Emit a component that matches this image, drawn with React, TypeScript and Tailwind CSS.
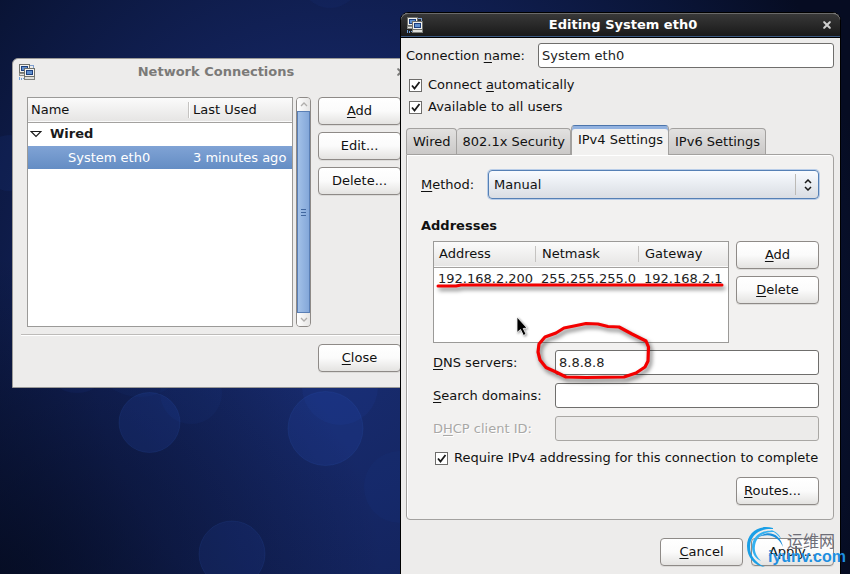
import React, { useState } from "react"
import clsx from "clsx"

const NetworkIcon = () => (
  <svg width="17" height="17" viewBox="0 0 17 17" shapeRendering="crispEdges">
    <path d="M11 1h3v4" fill="none" stroke="#7f9fcf" />
    <rect x="0" y="0" width="11" height="9" fill="#6f716c" />
    <rect x="1" y="1" width="9" height="7" fill="#f2f2ef" />
    <rect x="2" y="2" width="7" height="5" fill="#1d3f7d" />
    <rect x="3" y="3" width="5" height="3" fill="#5f8fce" />
    <rect x="0" y="9" width="6" height="3" fill="#8b8d88" />
    <rect x="1" y="10" width="5" height="1" fill="#e3e3df" />
    <rect x="5" y="4" width="11" height="9" fill="#6f716c" />
    <rect x="6" y="5" width="9" height="7" fill="#f2f2ef" />
    <rect x="7" y="6" width="7" height="5" fill="#1d3f7d" />
    <rect x="8" y="7" width="5" height="3" fill="#5f8fce" />
    <rect x="5" y="13" width="11" height="3" fill="#7f817c" />
    <rect x="6" y="13" width="9" height="2" fill="#dededa" />
    <rect x="0" y="13" width="1" height="3" fill="#6f9fd8" />
    <rect x="2" y="14" width="1" height="2" fill="#6f9fd8" />
    <rect x="4" y="14" width="1" height="1" fill="#6f9fd8" />
  </svg>
)

const CloseIcon = () => (
  <svg width="10" height="10" viewBox="0 0 10 10">
    <path d="M2 2L8 8M8 2L2 8" stroke="currentColor" strokeWidth="2" />
    <path d="M1 2h2M7 2h2M1 8h2M7 8h2" stroke="currentColor" strokeWidth="1" />
  </svg>
)

type ButtonProps = {
  children: React.ReactNode
  align?: "center" | "left"
  onClick?: () => void
}

const Button = ({ children, align = "center", onClick }: ButtonProps) => (
  <button
    type="button"
    onClick={onClick}
    className={clsx(
      "h-7 w-[83px] shrink-0 rounded border border-[#8e8a87] bg-linear-to-b from-white via-[#fbfbfb] to-[#e4e3e1] px-[7px] shadow-[0_1px_0_#dcdbd9]",
      align === "left" ? "text-left" : "text-center"
    )}
  >
    {children}
  </button>
)

type CheckProps = {
  id: string
  checked: boolean
  onChange: (value: boolean) => void
  children: React.ReactNode
}

const Check = ({ id, checked, onChange, children }: CheckProps) => (
  <div className="flex h-[22px] items-center gap-[6px]">
    <span className="relative flex h-[13px] w-[13px]">
      <input
        id={id}
        type="checkbox"
        checked={checked}
        onChange={e => onChange(e.target.checked)}
        className="h-[13px] w-[13px] appearance-none border border-[#6d6c6a] bg-white"
      />
      {checked && (
        <svg
          className="pointer-events-none absolute inset-0"
          width="13"
          height="13"
          viewBox="0 0 13 13"
        >
          <path d="M3 6.500L5.500 9.500L10.500 3" fill="none" stroke="#1a1a1a" strokeWidth="1.800" />
        </svg>
      )}
    </span>
    <label htmlFor={id}>{children}</label>
  </div>
)

type FieldProps = {
  id: string
  label: React.ReactNode
  value: string
  onChange?: (value: string) => void
  disabled?: boolean
}

const Field = ({ id, label, value, onChange, disabled }: FieldProps) => (
  <div className="flex items-center">
    <label
      htmlFor={id}
      className={clsx(
        "w-[122px] shrink-0",
        disabled && "text-[#a9a8a6] [text-shadow:1px_1px_0_#ffffff]"
      )}
    >
      {label}
    </label>
    <input
      id={id}
      type="text"
      value={value}
      disabled={disabled}
      onChange={e => onChange?.(e.target.value)}
      className={clsx(
        "h-[25px] min-w-0 grow rounded-[3px] border px-[3px]",
        disabled ? "border-[#a9a7a4] bg-[#ecebea]" : "border-[#6f6e6c] bg-white text-[#222]"
      )}
    />
  </div>
)

const Wallpaper = () => (
  <svg className="absolute inset-0" width="850" height="574" viewBox="0 0 850 574">
    <g fill="#2850b8">
      <circle cx="77" cy="359" r="34" opacity="0.09" />
      <circle cx="140" cy="345" r="52" opacity="0.06" />
      <circle cx="191" cy="393" r="31" opacity="0.07" />
      <circle cx="10" cy="163" r="28" opacity="0.1" />
      <circle cx="340" cy="387" r="38" opacity="0.1" />
      <circle cx="400" cy="487" r="36" opacity="0.06" />
      <circle cx="330" cy="-22" r="30" opacity="0.08" />
    </g>
    <g fill="#2850b8" fillOpacity="0.18" stroke="#3d68d0" strokeOpacity="0.12">
      <ellipse cx="149.500" cy="422.500" rx="30.500" ry="30" />
      <ellipse cx="325.500" cy="428.500" rx="37.500" ry="37" />
      <ellipse cx="232" cy="554" rx="33" ry="33" fillOpacity="0.14" />
    </g>
  </svg>
)

const sideButtons = [
  <>
    <u>A</u>dd
  </>,
  "Edit...",
  "Delete...",
]

const NetworkConnections = () => {
  const [open, setOpen] = useState(true)

  return (
    <section className="absolute top-[58px] left-3 w-[404px] rounded-t-md border border-[#9b9a98] bg-[#edeceb]">
      <header className="flex h-[26px] items-center px-[6px] text-[#7b7a78]">
        <NetworkIcon />
        <h1 className="grow text-center font-bold">Network Connections</h1>
        <button type="button" aria-label="Close window" className="pr-[3px]">
          <CloseIcon />
        </button>
      </header>

      <div className="mt-3 flex px-[14px]">
        <div className="h-[230px] min-w-0 grow border border-[#9b9a98] bg-white">
          <table className="w-full table-fixed border-collapse text-left">
            <thead>
              <tr className="h-6 border-b border-[#a3a19f] bg-linear-to-b from-[#fbfbfb] to-[#e6e5e4]">
                <th className="w-[160px] pl-[3px] font-normal">Name</th>
                <th className="p-0 font-normal">
                  <div className="border-l border-[#c5c3c1] pl-1 leading-4 shadow-[inset_1px_0_0_#fff]">
                    Last Used
                  </div>
                </th>
              </tr>
            </thead>
            <tbody>
              <tr className="h-6">
                <td colSpan={2} className="p-0 font-bold text-[#1a1a1a]">
                  <button
                    type="button"
                    onClick={() => setOpen(x => !x)}
                    className="flex items-center gap-2 pl-[2px]"
                  >
                    <svg width="12" height="8" viewBox="0 0 12 8">
                      <path d="M1 1.500H11L6 6.500Z" fill="white" stroke="#1a1a1a" strokeWidth="1.200" />
                    </svg>
                    Wired
                  </button>
                </td>
              </tr>
              {open && (
                <tr className="h-[23px] bg-linear-to-b from-[#80a3d5] to-[#648dc4] text-white">
                  <td className="py-0 pr-0 pl-10">System eth0</td>
                  <td className="py-0 pr-0 pl-[5px] whitespace-nowrap">3 minutes ago</td>
                </tr>
              )}
            </tbody>
          </table>
        </div>

        <div className="ml-[3px] flex w-[15px] shrink-0 flex-col overflow-hidden rounded border border-[#8e8a87]">
          <div className="flex h-[13px] items-center justify-center bg-linear-to-r from-white to-[#e6e5e4]">
            <svg width="8" height="5" viewBox="0 0 8 5">
              <path d="M1 4L4 1L7 4" fill="none" stroke="#b0aeac" strokeWidth="1.300" />
            </svg>
          </div>
          <div className="flex grow flex-col items-center justify-center gap-[2px] border-y border-[#5a7fb5] bg-linear-to-r from-[#a5c3e9] to-[#81a5d8] shadow-[inset_1px_0_0_#5a7fb5,inset_-1px_0_0_#5a7fb5]">
            <span className="h-px w-[5px] bg-[#41679f]"></span>
            <span className="h-px w-[5px] bg-[#41679f]"></span>
            <span className="h-px w-[5px] bg-[#41679f]"></span>
          </div>
          <div className="flex h-[13px] items-center justify-center bg-linear-to-r from-white to-[#e6e5e4]">
            <svg width="8" height="5" viewBox="0 0 8 5">
              <path d="M1 1L4 4L7 1" fill="none" stroke="#b0aeac" strokeWidth="1.300" />
            </svg>
          </div>
        </div>

        <div className="ml-[7px] flex flex-col gap-[7px]">
          {sideButtons.map((label, i) => (
            <Button key={i}>{label}</Button>
          ))}
        </div>
      </div>

      <hr className="mx-2 mt-[7px] border-t border-[#bdbbb9] shadow-[0_1px_0_#fff]" />
      <footer className="flex justify-end px-[14px] pt-[9px] pb-[15px]">
        <Button>
          <u>C</u>lose
        </Button>
      </footer>
    </section>
  )
}

const tabs = ["Wired", "802.1x Security", "IPv4 Settings", "IPv6 Settings"]

const EditConnection = () => {
  const [name, setName] = useState("System eth0")
  const [auto, setAuto] = useState(true)
  const [allUsers, setAllUsers] = useState(true)
  const [active, setActive] = useState(2)
  const [method, setMethod] = useState("Manual")
  const [dns, setDns] = useState("8.8.8.8")
  const [search, setSearch] = useState("")
  const [requireV4, setRequireV4] = useState(true)

  return (
    <section className="absolute top-3 left-[400px] w-[441px] rounded-t-lg border border-black bg-[#edeceb]">
      <header className="flex h-6 items-center rounded-t-[7px] border-t border-b border-t-[#6a6a6a] border-b-[#3d5a82] bg-linear-to-b from-[#383838] to-[#1a1a1a] px-[6px] text-white">
        <NetworkIcon />
        <h1 className="grow text-center font-bold">Editing System eth0</h1>
        <button type="button" aria-label="Close window" className="pr-[2px] text-[#d0d0d0]">
          <CloseIcon />
        </button>
      </header>

      <div className="border-t border-black pt-[5px] pr-[6px] pb-5 pl-[5px]">
        <div className="flex items-center">
          <label htmlFor="name" className="w-[132px] shrink-0">
            Connection <u>n</u>ame:
          </label>
          <input
            id="name"
            type="text"
            value={name}
            onChange={e => setName(e.target.value)}
            className="h-[25px] min-w-0 grow rounded-[3px] border border-[#6f6e6c] bg-white px-[3px] text-[#222]"
          />
        </div>

        <div className="mt-[6px] pl-[3px]">
          <Check id="auto" checked={auto} onChange={setAuto}>
            Connect <u>a</u>utomatically
          </Check>
          <Check id="users" checked={allUsers} onChange={setAllUsers}>
            Available to all users
          </Check>
        </div>

        <div role="tablist" className="mt-[7px] flex items-end">
          {tabs.map((tab, i) => (
            <button
              key={tab}
              type="button"
              role="tab"
              aria-selected={active === i}
              onClick={() => setActive(i)}
              className={clsx(
                "rounded-t-[4px] border border-b-0 pr-[5px] pl-[6px] whitespace-nowrap",
                active === i
                  ? "z-10 -mb-px h-[30px] border-[#a3a19f] border-t-[#4c75ab] bg-[#f2f1f0] pb-px shadow-[inset_0_3px_0_#92b2e0]"
                  : "h-[26px] border-[#a3a19f] bg-linear-to-b from-[#e2e1e0] to-[#cbc9c8] not-first:border-l-0"
              )}
            >
              {tab}
            </button>
          ))}
        </div>

        <div className="rounded-b rounded-tr border border-[#a3a19f] bg-[#f2f1f0] px-[14px] pt-[15px] pb-[14px] shadow-[inset_1px_1px_0_#fff]">
          <div className="flex items-center">
            <label htmlFor="method" className="w-[67px] shrink-0">
              <u>M</u>ethod:
            </label>
            <div className="relative grow">
              <select
                id="method"
                value={method}
                onChange={e => setMethod(e.target.value)}
                className="block h-[29px] w-full appearance-none rounded border border-[#5580b5] bg-linear-to-b from-[#f8fbff] to-[#d9dde3] pl-[5px] shadow-[0_0_0_1px_#b9cde8]"
              >
                <option>Manual</option>
                <option>Automatic (DHCP)</option>
                <option>Disabled</option>
              </select>
              <div className="pointer-events-none absolute inset-y-1 right-0 flex w-6 items-center justify-center border-l border-[#bcbab6]">
                <svg width="8" height="12" viewBox="0 0 8 12">
                  <path
                    d="M1 4L4 1L7 4M1 8L4 11L7 8"
                    fill="none"
                    stroke="#1a1a1a"
                    strokeWidth="1.500"
                  />
                </svg>
              </div>
            </div>
          </div>

          <h2 className="mt-[17px] font-bold leading-5">Addresses</h2>

          <div className="pl-3">
            <div className="mt-[5px] flex gap-[7px]">
              <div className="h-[102px] grow border border-[#9b9a98] bg-white">
                <table className="w-full table-fixed border-collapse text-left">
                  <thead>
                    <tr className="h-[25px] border-b border-[#a3a19f] bg-linear-to-b from-[#fbfbfb] to-[#e6e5e4]">
                      <th className="w-[101px] pl-[5px] font-normal">Address</th>
                      <th className="w-[103px] p-0 font-normal">
                        <div className="border-l border-[#c5c3c1] pl-[6px] leading-4">Netmask</div>
                      </th>
                      <th className="p-0 font-normal">
                        <div className="border-l border-[#c5c3c1] pl-[6px] leading-4">Gateway</div>
                      </th>
                    </tr>
                  </thead>
                  <tbody>
                    <tr className="h-[23px] text-[#222]">
                      <td className="py-0 pr-0 pl-1">192.168.2.200</td>
                      <td className="py-0 pr-0 pl-[6px]">255.255.255.0</td>
                      <td className="py-0 pr-0 pl-[6px]">192.168.2.1</td>
                    </tr>
                  </tbody>
                </table>
              </div>
              <div className="flex flex-col gap-[7px]">
                <Button>
                  <u>A</u>dd
                </Button>
                <Button>
                  <u>D</u>elete
                </Button>
              </div>
            </div>

            <div className="mt-[7px] flex flex-col gap-2">
              <Field
                id="dns"
                label={
                  <>
                    <u>D</u>NS servers:
                  </>
                }
                value={dns}
                onChange={setDns}
              />
              <Field
                id="search"
                label={
                  <>
                    <u>S</u>earch domains:
                  </>
                }
                value={search}
                onChange={setSearch}
              />
              <Field
                id="dhcp"
                label={
                  <>
                    D<u>H</u>CP client ID:
                  </>
                }
                value=""
                disabled
              />
            </div>

            <div className="mt-[6px] pl-[2px] whitespace-nowrap">
              <Check id="require" checked={requireV4} onChange={setRequireV4}>
                Require IPv4 addressing for this connection to complete
              </Check>
            </div>
            <div className="mt-2 flex justify-end">
              <Button align="left">
                <u>R</u>outes...
              </Button>
            </div>
          </div>
        </div>

        <footer className="mt-[18px] flex justify-end gap-2">
          <Button>
            <u>C</u>ancel
          </Button>
          <Button>Apply...</Button>
        </footer>
      </div>
    </section>
  )
}

// red pen marks and the mouse pointer
const Marks = () => (
  <svg
    className="pointer-events-none absolute inset-0"
    width="850"
    height="574"
    viewBox="0 0 850 574"
  >
    <g
      fill="none"
      stroke="#f30000"
      strokeWidth="3"
      strokeLinecap="round"
      strokeLinejoin="round"
      className="drop-shadow-[2px_3px_2px_rgba(0,0,0,0.55)]"
    >
      <path d="M438 286L456 286L461 285L722 285" />
      <path
        strokeWidth="3.200"
        d="M556 333L564 328L574 326L586 323.500L598 324L608 326.500L619 327L632 334L646 341L648.500 347L648 361L645 367L636 373L624 377L586 377.500L566 377L556 372L546 367.500L540 360L538 352L539 344L545 337Z"
      />
    </g>
    <path
      d="M517 317V332.500L520.500 329.500L523.500 335.500L526 334L523.200 328.500L527 328Z"
      fill="#000"
      stroke="#fff"
      strokeWidth="0.800"
      className="drop-shadow-[1px_1px_1px_rgba(0,0,0,0.4)]"
    />
  </svg>
)

const Watermark = () => (
  <div className="pointer-events-none absolute top-[526px] left-[746px] flex">
    <svg width="40" height="42" viewBox="0 0 40 42">
      <path d="M27 2C12-2 1 7 1 20C1 32 9 40 19 41C10 37 4 30 4 21C4 9 14 2 27 3Z" fill="#1a9fe6" />
      <path
        d="M28 5C16 3 6 10 6 21C6 28 10 33 15 35C11 31 8 26 9 20C10 12 17 5 28 6Z"
        fill="#35b1f0"
      />
      <path d="M13 11C22 3 35 8 37 21C33 12 25 6 13 11Z" fill="#1a8fdc" />
      <path d="M24 4C30 5 34 9 35 13C32 9 29 6 24 4Z" fill="#35b1f0" />
    </svg>
    <div className="-ml-[18px] flex flex-col">
      <span className="pt-[5px] pl-[19px] font-['Noto_Sans_CJK_SC',sans-serif] text-[16px] leading-[18px] text-[#6e6e78]">
        运维网
      </span>
      <span className="font-['Liberation_Sans',sans-serif] text-[16px] leading-[16px] font-bold text-[#1e8fe0]">
        iyunv.com
      </span>
    </div>
  </div>
)

const App = () => {
  return (
    <main className="relative h-screen overflow-hidden bg-[radial-gradient(ellipse_45%_55%_at_0%_100%,#030818b0_0%,#03081800_100%),radial-gradient(ellipse_64%_110%_at_40%_60%,#182c70_0%,#13235c_45%,#0a1538_80%,#060c22_100%)] font-['DejaVu_Sans',sans-serif] text-[13px] leading-5 text-[#111] [&_u]:underline-offset-2">
      <Wallpaper />
      <NetworkConnections />
      <EditConnection />
      <Marks />
      <Watermark />
    </main>
  )
}

export default App
